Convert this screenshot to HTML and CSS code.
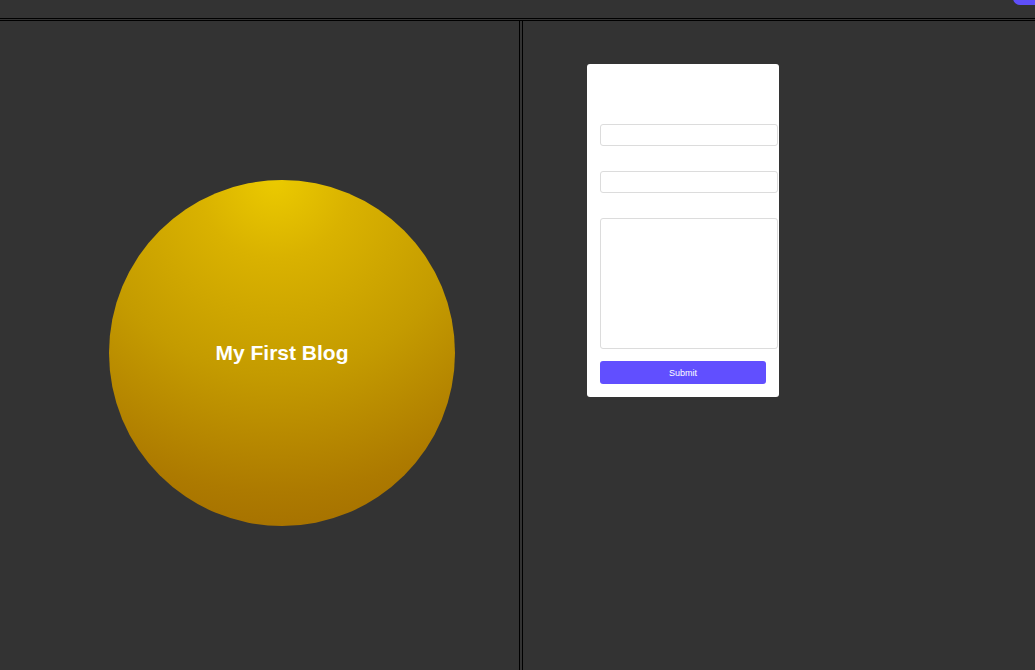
FILE: index.html
```html
<!DOCTYPE html>
<html>
<head>
<meta charset="utf-8">
<link rel="stylesheet" href="styles.css">
</head>
<body>
<header class="topbar">
  <div class="corner-btn"></div>
</header>
<main class="panes">
  <section class="pane pane-left">
    <div class="blog-circle"><span class="blog-title">My First Blog</span></div>
  </section>
  <section class="pane pane-right">
    <form class="card">
      <input class="field" type="text">
      <input class="field field-gap" type="text">
      <textarea class="field area field-gap"></textarea>
      <button class="submit" type="button">Submit</button>
    </form>
  </section>
</main>
</body>
</html>
```
FILE: styles.css
```css
html, body {
  margin: 0;
  padding: 0;
  background: #333333;
  height: 100%;
  overflow: hidden;
  font-family: "Liberation Sans", Arial, sans-serif;
}
.topbar {
  position: relative;
  height: 18px;
  border-bottom: 1px solid #000;
  margin-bottom: 1px;
  background: #333333;
  overflow: hidden;
}
.corner-btn {
  position: absolute;
  top: -16px;
  right: -12px;
  width: 34px;
  height: 21px;
  border-radius: 7px;
  background: #5f4ff9;
}
.panes {
  display: flex;
  gap: 2px;
  border-top: 1px solid #000;
  height: 649px;
}
.pane-left {
  flex: none;
  width: 520px;
  box-sizing: border-box;
  border-right: 1px solid #000;
  padding: 159px 0 0 109px;
}
.pane-right {
  flex: 1;
  border-left: 1px solid #000;
  padding: 43px 0 0 64px;
}
.blog-circle {
  width: 346px;
  height: 346px;
  border-radius: 50%;
  background: radial-gradient(circle at 48% 0%, #ebca00 0%, #d9b200 20%, #c49b00 50%, #ad7a00 80%, #a06a00 100%);
  display: flex;
  align-items: center;
  justify-content: center;
}
.blog-title {
  color: #fff;
  font-weight: bold;
  font-size: 21px;
}
.card {
  width: 192px;
  box-sizing: border-box;
  background: #fff;
  border-radius: 3px;
  padding: 60px 13px 13px 13px;
  display: flex;
  flex-direction: column;
  align-items: flex-start;
}
.field {
  width: 166px;
  height: 20px;
  padding: 0 5px;
  box-sizing: content-box;
  border: 1px solid #dcdcdc;
  border-radius: 3px;
  margin: 0;
  background: #fff;
  font-family: inherit;
}
.field-gap {
  margin-top: 25px;
}
.area {
  height: 129px;
  resize: none;
}
.submit {
  margin-top: 12px;
  width: 166px;
  height: 23px;
  border: none;
  border-radius: 3px;
  background: #614fff;
  color: #fff;
  font-family: inherit;
  font-size: 9px;
  padding: 0;
}
```
